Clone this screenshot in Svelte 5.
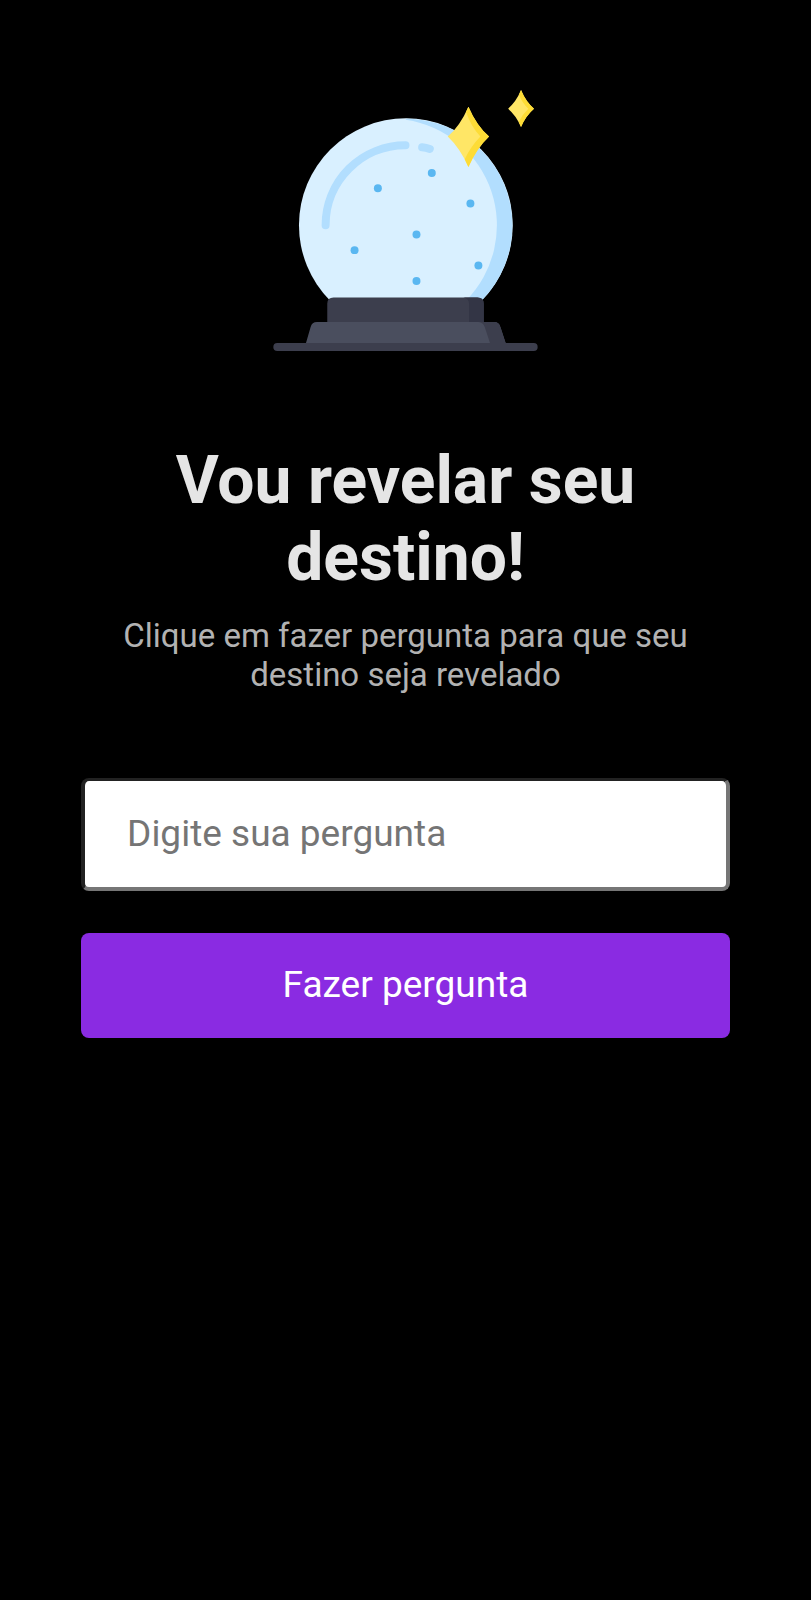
<script>
  let question = $state('');
  const bubbles = [
    [515, 277], [353, 323], [631, 369], [469, 462], [283, 509], [655, 555], [469, 602]
  ];
</script>

<main>
  <svg class="ball" viewBox="38 28 796 784" role="img" aria-label="Bola de cristal">
    <path fill="#d9f0ff" d="M209 660 A321 321 0 1 1 665 660 Z" />
    <path fill="#b2defe" d="M437 114 A321 321 0 0 1 665 660 L618 660 A321 321 0 0 0 437 117 Z" />
    <path class="shine" d="M196 434 A240 240 0 0 1 436 194" />
    <path class="shine" d="M486 200 Q498 201 509 205" />
    {#each bubbles as [x, y]}
      <circle cx={x} cy={y} r="12" fill="#5ab7f1" />
    {/each}
    <path fill="#3c3e4d" d="M201 732 V670 Q201 651 220 651 H652 Q671 651 671 670 V732 Z" />
    <path fill="#333545" d="M610 651 H652 Q671 651 671 670 V732 H627 V670 Q627 654 610 651 Z" />
    <path fill="#4a4e5e" d="M136 792 L151 740 Q155 725 170 725 H702 Q717 725 721 740 L738 792 Z" />
    <path fill="#3c3e4d" d="M655 725 H702 Q717 725 721 740 L738 792 H691 L674 740 Q670 726 655 725 Z" />
    <rect x="39" y="788" width="794" height="24" rx="12" fill="#3c3e4d" />
    <path fill="#ffe666" d="M625 78 Q649 134 687 168 Q651 202 625 259 Q599 202 563 168 Q601 134 625 78 Z" />
    <path fill="#fddc36" d="M625 78 Q649 134 687 168 Q651 202 625 259 L614 236 Q632 198 661 168 Q633 138 618 94 Z" />
    <path fill="#ffe666" d="M783 28 Q798 64 822 84 Q798 104 783 139 Q768 104 744 84 Q768 64 783 28 Z" />
    <path fill="#fddc36" d="M783 28 Q798 64 822 84 Q798 104 783 139 L776 124 Q786 102 805 84 Q786 66 777 42 Z" />
  </svg>

  <h1>Vou revelar seu destino!</h1>
  <p>Clique em fazer pergunta para que seu destino seja revelado</p>

  <form onsubmit={(event) => event.preventDefault()}>
    <input type="text" aria-label="Digite sua pergunta" placeholder="Digite sua pergunta" bind:value={question} />
    <button type="submit">Fazer pergunta</button>
  </form>
</main>

<style>
  :global(body) {
    margin: 0;
    background: #000;
  }

  main {
    box-sizing: border-box;
    min-height: 100vh;
    padding: 90px 10% 40px;
    display: flex;
    flex-direction: column;
    align-items: center;
    font-family: Roboto, sans-serif;
    text-align: center;
  }

  .ball {
    width: 265px;
    height: 261px;
  }

  .shine {
    fill: none;
    stroke: #b2defe;
    stroke-width: 24;
    stroke-linecap: round;
  }

  h1 {
    margin: 91px 0 0;
    color: #e5e5e5;
    font-size: 66px;
    font-weight: 700;
    line-height: 77px;
  }

  p {
    margin: 20px 0 0;
    color: #b2b2b2;
    font-size: 33px;
    line-height: 39px;
  }

  form {
    width: 100%;
    margin-top: 84px;
    display: flex;
    flex-direction: column;
    gap: 42px;
  }

  input,
  button {
    box-sizing: border-box;
    width: 100%;
    border-radius: 8px;
    font-family: inherit;
    font-size: 37px;
    line-height: 43px;
  }

  input {
    padding: 31px 42px 32px;
    border: 4px solid;
    border-top-width: 3px;
    border-color: #222 #767676 #767676 #222;
    background: #fff;
    color: #000;
  }

  input::placeholder {
    color: #757575;
    opacity: 1;
  }

  button {
    padding: 30px 42px 32px;
    border: 0;
    background: #8a2be2;
    color: #fff;
    cursor: pointer;
  }
</style>
